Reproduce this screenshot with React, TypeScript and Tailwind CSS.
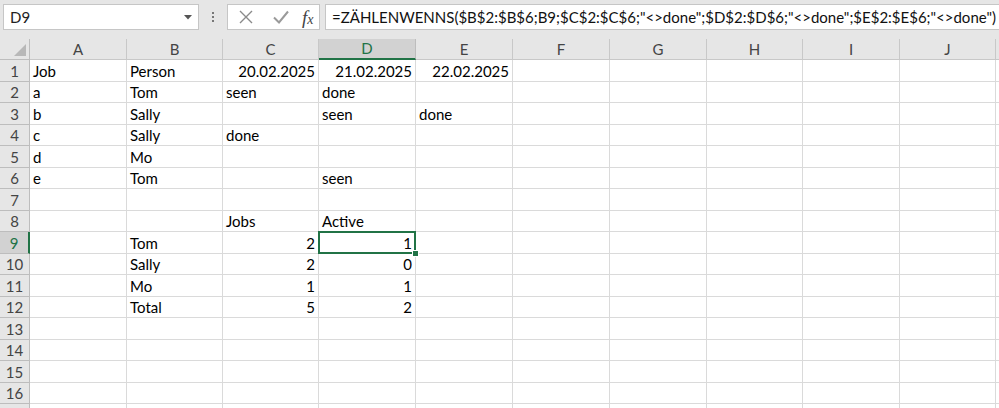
import React from "react";

const colW = [97, 96, 96, 97, 97, 97, 97, 96, 97, 96];
const letters = ["A", "B", "C", "D", "E", "F", "G", "H", "I", "J"];

type Cell = { t: string; r?: boolean };
const L = (t: string): Cell => ({ t });
const R = (t: string): Cell => ({ t, r: true });
const E: Cell = { t: "" };

const data: Cell[][] = [
  [L("Job"), L("Person"), R("20.02.2025"), R("21.02.2025"), R("22.02.2025")],
  [L("a"), L("Tom"), L("seen"), L("done")],
  [L("b"), L("Sally"), E, L("seen"), L("done")],
  [L("c"), L("Sally"), L("done")],
  [L("d"), L("Mo")],
  [L("e"), L("Tom"), E, L("seen")],
  [],
  [E, E, L("Jobs"), L("Active")],
  [E, L("Tom"), R("2"), R("1")],
  [E, L("Sally"), R("2"), R("0")],
  [E, L("Mo"), R("1"), R("1")],
  [E, L("Total"), R("5"), R("2")],
  [],
  [],
  [],
  [],
  [],
];

const font = { fontFamily: "Lato, 'Open Sans', sans-serif" };

export default function App() {
  return (
    <div className="w-[999px] h-[408px] overflow-hidden bg-white relative" style={font}>
      {/* formula bar */}
      <div className="h-[39px] bg-[#e6e6e6] flex items-start pt-[4px] pl-[3px]">
        <div className="w-[196px] h-[26px] bg-white border border-[#c6c6c6] flex items-center justify-between pl-[6px] pr-[6px]">
          <span className="text-[15px] text-[#222]">D9</span>
          <svg width="8" height="5" viewBox="0 0 8 5" className="mt-[1px]">
            <path d="M0 0 L8 0 L4 4.5 Z" fill="#555" />
          </svg>
        </div>
        <div className="w-[28px] h-[26px] flex flex-col items-center justify-center gap-[2px]">
          <span className="w-[2px] h-[2px] bg-[#777]" />
          <span className="w-[2px] h-[2px] bg-[#777]" />
          <span className="w-[2px] h-[2px] bg-[#777]" />
        </div>
        <div className="w-[93px] h-[26px] bg-white border border-[#c6c6c6] flex items-center pl-[10px]">
          <svg width="16" height="16" viewBox="0 0 16 16">
            <path d="M2 2 L14 14 M14 2 L2 14" stroke="#8a8a8a" strokeWidth="1.4" fill="none" />
          </svg>
          <svg width="18" height="16" viewBox="0 0 18 16" className="ml-[18px]">
            <path d="M2 8.5 L7 13.5 L16 2.5" stroke="#9a9a9a" strokeWidth="2" fill="none" />
          </svg>
          <span
            className="ml-[12px] text-[#444] italic leading-none"
            style={{ fontFamily: "'Liberation Serif', 'DejaVu Serif', serif" }}
          >
            <span className="text-[19px]">f</span>
            <span className="text-[14px]">x</span>
          </span>
        </div>
        <div className="ml-[5px] flex-1 h-[26px] bg-white border border-[#c6c6c6] border-r-0 flex items-center pl-[6px] whitespace-nowrap">
          <span className="text-[15px] text-[#111]">
            =ZÄHLENWENNS($B$2:$B$6;B9;$C$2:$C$6;"&lt;&gt;done";$D$2:$D$6;"&lt;&gt;done";$E$2:$E$6;"&lt;&gt;done")
          </span>
        </div>
      </div>

      {/* column headers */}
      <div className="flex h-[21px] bg-[#e6e6e6]">
        <div className="w-[30px] h-full border-r border-b border-[#bdbdbd] relative">
          <svg width="12" height="12" viewBox="0 0 12 12" className="absolute right-[3px] bottom-[3px]">
            <path d="M12 0 L12 12 L0 12 Z" fill="#b8b8b8" />
          </svg>
        </div>
        {letters.map((l, i) => {
          const sel = l === "D";
          return (
            <div
              key={l}
              style={{ width: colW[i] }}
              className={
                sel
                  ? "h-full bg-[#d2d2d2] border-r border-[#bdbdbd] border-b-2 border-b-[#217346] flex items-center justify-center text-[15px] text-[#217346]"
                  : "h-full border-r border-b border-[#c8c8c8] flex items-center justify-center text-[15px] text-[#444]"
              }
            >
              {l}
            </div>
          );
        })}
        <div className="flex-1 h-full border-b border-[#c8c8c8]" />
      </div>

      {/* rows */}
      {data.map((row, ri) => {
        const h = ri % 2 === 0 ? 22 : 21;
        const rowSel = ri === 8;
        const last = ri === 16;
        return (
          <div key={ri} className="flex" style={{ height: h }}>
            <div
              className={
                rowSel
                  ? "w-[30px] h-full bg-[#d2d2d2] border-b border-[#bdbdbd] border-r-2 border-r-[#217346] flex items-end pb-[1px] justify-center text-[15px] leading-[18px] text-[#217346]"
                  : "w-[30px] h-full bg-[#e6e6e6] border-r border-b border-[#bdbdbd] flex items-end pb-[1px] justify-center text-[15px] leading-[18px] text-[#444]"
              }
            >
              {last ? "" : ri + 1}
            </div>
            {colW.map((w, ci) => {
              const c = row[ci];
              const sel = ri === 8 && ci === 3;
              return (
                <div
                  key={ci}
                  style={{ width: w }}
                  className={
                    "h-full border-r border-b border-[#dadada] flex items-end pb-[1px] px-[3px] text-[15px] leading-[18px] text-black whitespace-nowrap relative " +
                    (c && c.r ? "justify-end" : "justify-start") +
                    (sel ? " z-10" : "")
                  }
                >
                  {c ? c.t : ""}
                  {sel && (
                    <div className="absolute left-[-1px] top-[-1px] right-[-1px] bottom-[-1px] border-2 border-[#217346] pointer-events-none">
                      <div className="absolute right-[-5px] bottom-[-5px] w-[7px] h-[7px] bg-[#217346] border border-white" />
                    </div>
                  )}
                </div>
              );
            })}
            <div className="flex-1 h-full border-b border-[#dadada]" />
          </div>
        );
      })}
    </div>
  );
}
